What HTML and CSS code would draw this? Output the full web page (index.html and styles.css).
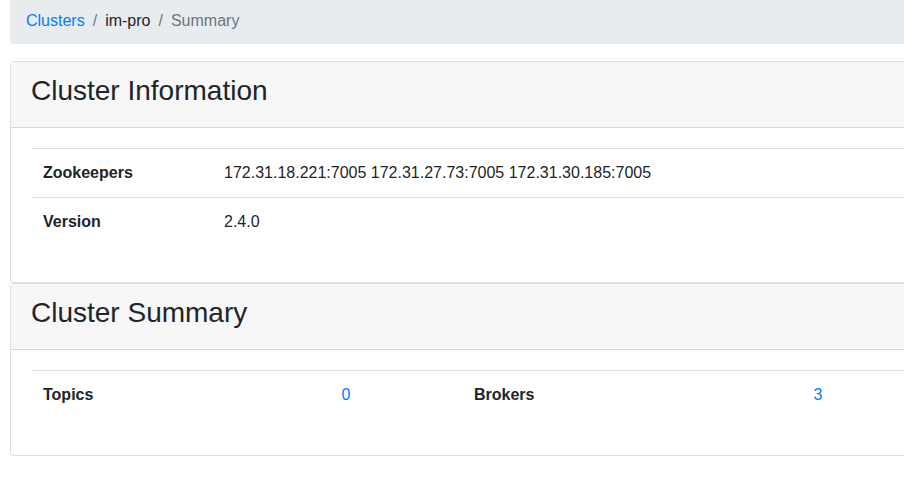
FILE: index.html
```html
<!DOCTYPE html>
<html>
<head>
<meta charset="utf-8">
<link rel="stylesheet" href="styles.css">
</head>
<body>
<div class="page">
  <nav class="breadcrumb">
    <a class="crumb link" href="#">Clusters</a>
    <span class="sep">/</span>
    <span class="crumb">im-pro</span>
    <span class="sep">/</span>
    <span class="crumb active">Summary</span>
  </nav>

  <div class="card">
    <div class="card-header"><h3>Cluster Information</h3></div>
    <div class="card-body">
      <table class="tbl">
        <tr><th class="c-label">Zookeepers</th><td>172.31.18.221:7005 172.31.27.73:7005 172.31.30.185:7005</td></tr>
        <tr><th class="c-label">Version</th><td>2.4.0</td></tr>
      </table>
    </div>
  </div>

  <div class="card">
    <div class="card-header"><h3>Cluster Summary</h3></div>
    <div class="card-body">
      <table class="tbl sum">
        <tr>
          <th class="s1">Topics</th>
          <td class="s2"><a class="link" href="#">0</a></td>
          <th class="s3">Brokers</th>
          <td class="s4"><a class="link" href="#">3</a></td>
        </tr>
      </table>
    </div>
  </div>
</div>
</body>
</html>
```

FILE: styles.css
```css
html, body {
  margin: 0;
  padding: 0;
  background: #fff;
  overflow: hidden;
}
body {
  font-family: "Liberation Sans", Arial, sans-serif;
  font-size: 16px;
  line-height: 24px;
  color: #212529;
}
.page {
  width: 986px;
  margin-left: 10px;
}
.breadcrumb {
  display: flex;
  align-items: center;
  height: 44px;
  box-sizing: border-box;
  padding: 0 16px 2px;
  background: #e9ecef;
  border-radius: 0 0 4px 4px;
  margin-bottom: 17px;
}
.sep {
  color: #6c757d;
  padding: 0 8px;
}
.link {
  color: #007bff;
  text-decoration: none;
}
.active {
  color: #6c757d;
}
.card {
  border: 1px solid rgba(0,0,0,.125);
  border-radius: 4px;
  background: #fff;
}
.card-header {
  background: #f7f7f7;
  border-bottom: 1px solid rgba(0,0,0,.125);
  padding: 12px 20px;
}
.card-header h3 {
  margin: 0 0 8px;
  font-size: 28px;
  font-weight: 400;
  line-height: 33px;
}
.card-body {
  padding: 20px;
}
.tbl {
  width: 100%;
  border-collapse: collapse;
  margin-bottom: 16px;
  table-layout: fixed;
}
.tbl th, .tbl td {
  padding: 12px;
  border-top: 1px solid #dee2e6;
  text-align: left;
  vertical-align: top;
  line-height: 24px;
}
.tbl th {
  font-weight: bold;
}
.c-label {
  width: 157px;
}
.s1 { width: 175px; }
.s2 { width: 208px; text-align: center !important; }
.s3 { width: 175px; }
.s4 { width: 290px; text-align: center !important; }
```
